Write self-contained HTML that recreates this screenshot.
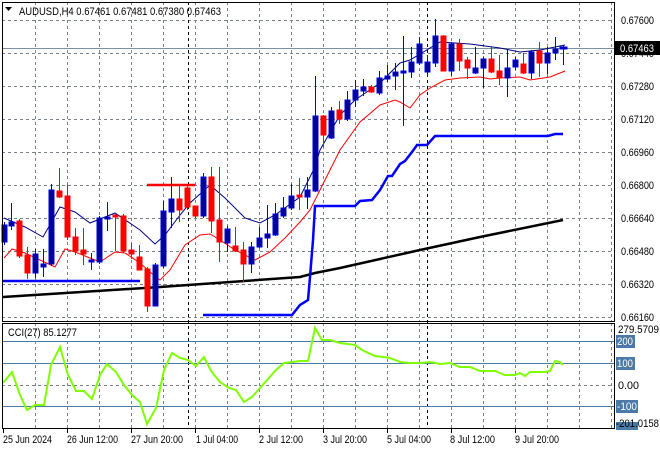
<!DOCTYPE html>
<html><head><meta charset="utf-8"><style>
html,body{margin:0;padding:0;background:#fff;width:660px;height:450px;overflow:hidden}
svg{display:block}
text{font-family:"Liberation Sans",sans-serif;font-size:11px;fill:#000}
</style></head><body>
<svg width="660" height="450" viewBox="0 0 660 450" xmlns="http://www.w3.org/2000/svg">
<rect width="660" height="450" fill="#fff"/>
<g stroke="#78808a" stroke-width="1" stroke-dasharray="3,3" fill="none">
<path d="M35.5 2V321M67.5 2V321M99.5 2V321M131.5 2V321M163.5 2V321M195.5 2V321M227.5 2V321M259.5 2V321M291.5 2V321M323.5 2V321M355.5 2V321M387.5 2V321M419.5 2V321M451.5 2V321M483.5 2V321M515.5 2V321M547.5 2V321M579.5 2V321M611.5 2V321"/>
<path d="M35.5 323V428M67.5 323V428M99.5 323V428M131.5 323V428M163.5 323V428M195.5 323V428M227.5 323V428M259.5 323V428M291.5 323V428M323.5 323V428M355.5 323V428M387.5 323V428M419.5 323V428M451.5 323V428M483.5 323V428M515.5 323V428M547.5 323V428M579.5 323V428M611.5 323V428"/>
<path d="M2 20.5H614M2 53.5H614M2 86.5H614M2 119.5H614M2 152.5H614M2 185.5H614M2 218.5H614M2 251.5H614M2 284.5H614M2 317.5H614M2 385.5H614"/>
</g>
<g stroke="#000" stroke-dasharray="3,3"><path d="M188.5 2V428M427.5 2V428"/></g>
<path d="M2 48.5H614" stroke="#7890a0"/>
<g stroke="#4a7aa8"><path d="M2 341.5H614M2 363.5H614M2 406.5H614"/></g>
<polyline fill="none" stroke="#000" stroke-width="2.5" points="3,297 160,287 300,277 315,273 340,268 420,250 480,237 563,220"/>
<polyline fill="none" stroke="#0000ff" stroke-width="2.5" points="3,281 140,281"/>
<polyline fill="none" stroke="#ff0000" stroke-width="2.5" points="147,185 195,185"/>
<polyline fill="none" stroke="#0000ff" stroke-width="2.5" points="203,315 292,315 300,305 308,300 310,277 313,240 315,206 355,206 360,201 372,200 380,190 388,176 392,176 400,164 405,161 412,152 417,145 427,145 435,136 548,136 555,134 563,134"/>
<polyline fill="none" stroke="#ff0000" stroke-width="1" points="4,258 12,249 25,253 40,260 55,267 65,249 75,252 90,258 100,262 115,252 125,253 140,263 150,272 160,280 170,270 185,245 200,235 210,234 220,240 235,250 255,260 270,252 285,238 300,222 310,210 320,190 340,150 360,122 380,105 395,100 400,102 410,108 420,95 430,88 445,80 460,78 480,77 490,79 500,78 520,77 530,80 550,77 565,71"/>
<polyline fill="none" stroke="#000080" stroke-width="1" points="4,218 25,227 43,237 60,207 75,212 90,223 115,213 140,230 155,244 165,235 180,215 190,203 210,185 225,198 245,218 260,223 275,215 300,197 315,167 320,150 340,115 355,100 380,83 400,63 410,60 440,42 470,44 500,48 520,52 540,50 555,47 565,45"/>
<g stroke-width="1">
<g stroke="#0000e0" fill="#0000a0">
<line x1="4.5" x2="4.5" y1="222" y2="245"/><rect x="2" y="225" width="5" height="17"/>
<line x1="11.5" x2="11.5" y1="203" y2="230"/><rect x="9" y="222" width="5" height="4"/>
<line x1="35.5" x2="35.5" y1="249" y2="278"/><rect x="33" y="254" width="5" height="19"/>
<line x1="43.5" x2="43.5" y1="249" y2="277"/><rect x="41" y="264" width="5" height="3"/>
<line x1="51.5" x2="51.5" y1="184" y2="266"/><rect x="49" y="190" width="5" height="74"/>
<line x1="91.5" x2="91.5" y1="253" y2="270"/><rect x="89" y="260" width="5" height="2"/>
<line x1="99.5" x2="99.5" y1="216" y2="264"/><rect x="97" y="218" width="5" height="44"/>
<line x1="107.5" x2="107.5" y1="202" y2="231"/><rect x="105" y="217" width="5" height="2"/>
<line x1="155.5" x2="155.5" y1="263" y2="306"/><rect x="153" y="265" width="5" height="41"/>
<line x1="163.5" x2="163.5" y1="201" y2="268"/><rect x="161" y="211" width="5" height="55"/>
<line x1="171.5" x2="171.5" y1="177" y2="228"/><rect x="169" y="199" width="5" height="13"/>
<line x1="203.5" x2="203.5" y1="173" y2="218"/><rect x="201" y="177" width="5" height="39"/>
<line x1="227.5" x2="227.5" y1="226" y2="252"/><rect x="225" y="229" width="5" height="14"/>
<line x1="251.5" x2="251.5" y1="242" y2="273"/><rect x="249" y="247" width="5" height="17"/>
<line x1="259.5" x2="259.5" y1="227" y2="248"/><rect x="257" y="238" width="5" height="9"/>
<line x1="267.5" x2="267.5" y1="205" y2="248"/><rect x="265" y="234" width="5" height="4"/>
<line x1="275.5" x2="275.5" y1="203" y2="236"/><rect x="273" y="214" width="5" height="21"/>
<line x1="283.5" x2="283.5" y1="197" y2="218"/><rect x="281" y="208" width="5" height="8"/>
<line x1="291.5" x2="291.5" y1="184" y2="210"/><rect x="289" y="196" width="5" height="12"/>
<line x1="307.5" x2="307.5" y1="177" y2="209"/><rect x="305" y="190" width="5" height="7"/>
<line x1="315.5" x2="315.5" y1="76" y2="192"/><rect x="313" y="116" width="5" height="75"/>
<line x1="331.5" x2="331.5" y1="107" y2="139"/><rect x="329" y="111" width="5" height="27"/>
<line x1="347.5" x2="347.5" y1="91" y2="121"/><rect x="345" y="100" width="5" height="19"/>
<line x1="355.5" x2="355.5" y1="80" y2="107"/><rect x="353" y="90" width="5" height="10"/>
<line x1="363.5" x2="363.5" y1="79" y2="96"/><rect x="361" y="87" width="5" height="4"/>
<line x1="379.5" x2="379.5" y1="71" y2="95"/><rect x="377" y="78" width="5" height="15"/>
<line x1="387.5" x2="387.5" y1="65" y2="82"/><rect x="385" y="76" width="5" height="3"/>
<line x1="395.5" x2="395.5" y1="63" y2="90"/><rect x="393" y="72" width="5" height="4"/>
<line x1="403.5" x2="403.5" y1="36" y2="126"/><rect x="401" y="71" width="5" height="2"/>
<line x1="411.5" x2="411.5" y1="47" y2="78"/><rect x="409" y="62" width="5" height="10"/>
<line x1="419.5" x2="419.5" y1="37" y2="65"/><rect x="417" y="44" width="5" height="19"/>
<line x1="427.5" x2="427.5" y1="55" y2="77"/><rect x="425" y="62" width="5" height="10"/>
<line x1="435.5" x2="435.5" y1="19" y2="67"/><rect x="433" y="36" width="5" height="27"/>
<line x1="451.5" x2="451.5" y1="42" y2="76"/><rect x="449" y="44" width="5" height="27"/>
<line x1="475.5" x2="475.5" y1="47" y2="74"/><rect x="473" y="68" width="5" height="5"/>
<line x1="483.5" x2="483.5" y1="57" y2="88"/><rect x="481" y="59" width="5" height="9"/>
<line x1="507.5" x2="507.5" y1="50" y2="97"/><rect x="505" y="68" width="5" height="10"/>
<line x1="515.5" x2="515.5" y1="57" y2="70"/><rect x="513" y="60" width="5" height="7"/>
<line x1="531.5" x2="531.5" y1="50" y2="79"/><rect x="529" y="52" width="5" height="21"/>
<line x1="547.5" x2="547.5" y1="47" y2="74"/><rect x="545" y="53" width="5" height="10"/>
<line x1="555.5" x2="555.5" y1="37" y2="60"/><rect x="553" y="49" width="5" height="4"/>
<line x1="563.5" x2="563.5" y1="45" y2="65"/><rect x="560" y="47" width="7" height="2"/>
</g>
<g stroke="#ff0000" fill="#ff0000">
<line x1="19.5" x2="19.5" y1="219" y2="258"/><rect x="17" y="221" width="5" height="35"/>
<line x1="27.5" x2="27.5" y1="247" y2="279"/><rect x="25" y="255" width="5" height="18"/>
<line x1="59.5" x2="59.5" y1="168" y2="198"/><rect x="57" y="191" width="5" height="6"/>
<line x1="67.5" x2="67.5" y1="185" y2="240"/><rect x="65" y="196" width="5" height="41"/>
<line x1="75.5" x2="75.5" y1="228" y2="255"/><rect x="73" y="237" width="5" height="14"/>
<line x1="83.5" x2="83.5" y1="228" y2="265"/><rect x="81" y="250" width="5" height="4"/>
<line x1="115.5" x2="115.5" y1="213" y2="251"/><rect x="113" y="215" width="5" height="2"/>
<line x1="123.5" x2="123.5" y1="214" y2="253"/><rect x="121" y="216" width="5" height="35"/>
<line x1="131.5" x2="131.5" y1="243" y2="259"/><rect x="129" y="250" width="5" height="4"/>
<line x1="139.5" x2="139.5" y1="245" y2="270"/><rect x="137" y="257" width="5" height="13"/>
<line x1="147.5" x2="147.5" y1="267" y2="312"/><rect x="145" y="269" width="5" height="37"/>
<line x1="179.5" x2="179.5" y1="185" y2="222"/><rect x="177" y="199" width="5" height="11"/>
<line x1="187.5" x2="187.5" y1="185" y2="210"/><rect x="185" y="188" width="5" height="19"/>
<line x1="195.5" x2="195.5" y1="206" y2="218"/><rect x="193" y="206" width="5" height="10"/>
<line x1="211.5" x2="211.5" y1="167" y2="233"/><rect x="209" y="177" width="5" height="44"/>
<line x1="219.5" x2="219.5" y1="167" y2="262"/><rect x="217" y="220" width="5" height="22"/>
<line x1="235.5" x2="235.5" y1="227" y2="252"/><rect x="233" y="246" width="5" height="5"/>
<line x1="243.5" x2="243.5" y1="242" y2="282"/><rect x="241" y="250" width="5" height="14"/>
<line x1="299.5" x2="299.5" y1="178" y2="210"/><rect x="297" y="195" width="5" height="2"/>
<line x1="323.5" x2="323.5" y1="115" y2="147"/><rect x="321" y="116" width="5" height="19"/>
<line x1="339.5" x2="339.5" y1="101" y2="124"/><rect x="337" y="110" width="5" height="9"/>
<line x1="371.5" x2="371.5" y1="85" y2="93"/><rect x="369" y="87" width="5" height="5"/>
<line x1="443.5" x2="443.5" y1="35" y2="71"/><rect x="441" y="36" width="5" height="35"/>
<line x1="459.5" x2="459.5" y1="39" y2="71"/><rect x="457" y="44" width="5" height="17"/>
<line x1="467.5" x2="467.5" y1="57" y2="79"/><rect x="465" y="60" width="5" height="8"/>
<line x1="491.5" x2="491.5" y1="47" y2="73"/><rect x="489" y="59" width="5" height="13"/>
<line x1="499.5" x2="499.5" y1="55" y2="85"/><rect x="497" y="71" width="5" height="7"/>
<line x1="523.5" x2="523.5" y1="53" y2="74"/><rect x="521" y="64" width="5" height="9"/>
<line x1="539.5" x2="539.5" y1="42" y2="77"/><rect x="537" y="51" width="5" height="12"/>
</g>
</g>
<polyline fill="none" stroke="#7fff00" stroke-width="2" points="3,383 12,372 20,395 27,410 35,405 44,405 51,365 60,347 68,375 76,391 84,391 92,399 100,375 107,364 116,372 124,385 132,395 140,402 147,424 156,408 164,370 172,353 180,358 188,360 196,366 204,357 211,371 220,382 229,388 236,390 244,402 252,397 260,388 268,379 276,370 284,363 292,362 300,361 308,361 315,328 322,340 330,340 340,343 355,345 362,350 375,356 390,358 400,362 410,363 420,363 430,362 440,364 450,363 460,367 470,367 480,371 495,371 500,373 505,375 515,375 520,373 525,376 530,372 545,372 550,371 555,361 560,362 563,365"/>
<g fill="none" stroke="#000" stroke-width="1">
<rect x="2.5" y="2.5" width="612" height="319"/>
<rect x="2.5" y="323.5" width="612" height="105"/>
</g>
<path d="M5 7h7l-3.5 4z" fill="#000"/>
<text x="19" y="15" textLength="202" lengthAdjust="spacingAndGlyphs">AUDUSD,H4  0.67461 0.67481 0.67380 0.67463</text>
<text x="8" y="336" textLength="69" lengthAdjust="spacingAndGlyphs">CCI(27) 85.1277</text>
<g>
<text x="621" y="24" textLength="33" lengthAdjust="spacingAndGlyphs">0.67600</text>
<text x="621" y="57" textLength="33" lengthAdjust="spacingAndGlyphs">0.67440</text>
<text x="621" y="90" textLength="33" lengthAdjust="spacingAndGlyphs">0.67280</text>
<text x="621" y="123" textLength="33" lengthAdjust="spacingAndGlyphs">0.67120</text>
<text x="621" y="156" textLength="33" lengthAdjust="spacingAndGlyphs">0.66960</text>
<text x="621" y="189" textLength="33" lengthAdjust="spacingAndGlyphs">0.66800</text>
<text x="621" y="222" textLength="33" lengthAdjust="spacingAndGlyphs">0.66640</text>
<text x="621" y="255" textLength="33" lengthAdjust="spacingAndGlyphs">0.66480</text>
<text x="621" y="288" textLength="33" lengthAdjust="spacingAndGlyphs">0.66320</text>
<text x="621" y="321" textLength="33" lengthAdjust="spacingAndGlyphs">0.66160</text>
</g>
<rect x="615" y="41" width="45" height="14" fill="#000"/>
<text x="620" y="52" style="fill:#fff" textLength="34" lengthAdjust="spacingAndGlyphs">0.67463</text>
<text x="618" y="333" textLength="41" lengthAdjust="spacingAndGlyphs">279.5709</text>
<rect x="616" y="335" width="19" height="13" fill="#4a7aa8"/><text x="617" y="345" style="fill:#fff" textLength="16" lengthAdjust="spacingAndGlyphs">200</text>
<rect x="616" y="357" width="19" height="13" fill="#4a7aa8"/><text x="617" y="367" style="fill:#fff" textLength="16" lengthAdjust="spacingAndGlyphs">100</text>
<text x="618" y="389" textLength="21" lengthAdjust="spacingAndGlyphs">0.00</text>
<rect x="616" y="400" width="22" height="13" fill="#4a7aa8"/><text x="617" y="410" style="fill:#fff" textLength="20" lengthAdjust="spacingAndGlyphs">-100</text>
<rect x="616" y="422" width="22" height="8" fill="#4a7aa8"/>
<text x="616" y="427" textLength="43" lengthAdjust="spacingAndGlyphs">-201.0158</text>
<g stroke="#000"><path d="M3.5 429v4M67.5 429v4M131.5 429v4M195.5 429v4M259.5 429v4M323.5 429v4M387.5 429v4M451.5 429v4M515.5 429v4"/></g>
<text x="3" y="443" textLength="49" lengthAdjust="spacingAndGlyphs">25 Jun 2024</text>
<text x="67" y="443" textLength="51" lengthAdjust="spacingAndGlyphs">26 Jun 12:00</text>
<text x="131" y="443" textLength="52" lengthAdjust="spacingAndGlyphs">27 Jun 20:00</text>
<text x="196" y="443" textLength="42" lengthAdjust="spacingAndGlyphs">1 Jul 04:00</text>
<text x="259" y="443" textLength="44" lengthAdjust="spacingAndGlyphs">2 Jul 12:00</text>
<text x="323" y="443" textLength="44" lengthAdjust="spacingAndGlyphs">3 Jul 20:00</text>
<text x="387" y="443" textLength="44" lengthAdjust="spacingAndGlyphs">5 Jul 04:00</text>
<text x="450" y="443" textLength="45" lengthAdjust="spacingAndGlyphs">8 Jul 12:00</text>
<text x="515" y="443" textLength="44" lengthAdjust="spacingAndGlyphs">9 Jul 20:00</text>
</svg>
</body></html>
